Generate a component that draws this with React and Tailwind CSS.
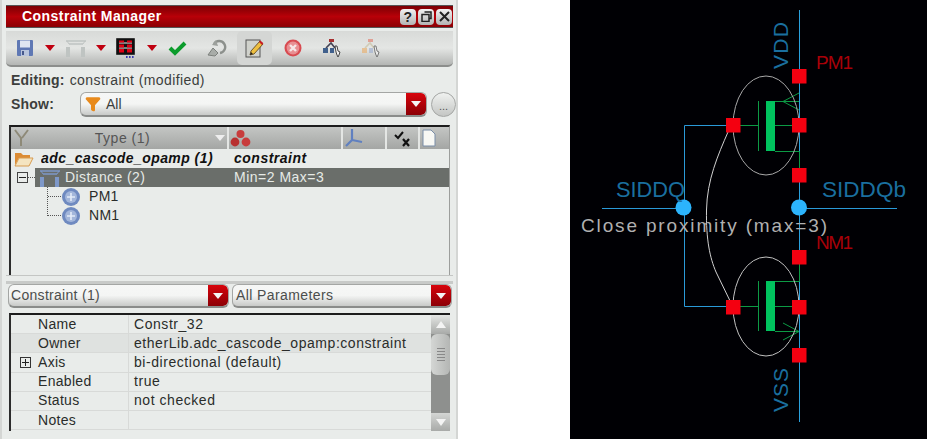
import { Filter } from 'lucide-react';

const Caret = ({ className = 'ml-2' }) => (
  <svg width="10" height="6" viewBox="0 0 10 6" className={className}><path d="M0 0h10L5 6z" fill="#c00010" /></svg>
);

const ComboButton = ({ w = 'w-[20px]' }) => (
  <div className={`${w} self-stretch flex items-center justify-center rounded-r-[5px] bg-gradient-to-b from-[#d8040c] to-[#8c0006]`}>
    <svg width="10" height="6" viewBox="0 0 10 6"><path d="M0 0h10L5 6z" fill="#f4f4f4" /></svg>
  </div>
);

const Combo = ({ className, children }) => (
  <div className={`flex items-center rounded-[6px] border border-[#a4a6a4] border-b-2 border-b-[#8a8c8a] bg-gradient-to-b from-[#f6f7f6] via-[#f4f5f4] to-[#c8cac8] overflow-hidden ${className}`}>
    <div className="flex-1 flex items-center min-w-0">{children}</div>
    <ComboButton />
  </div>
);

const TitleButton = ({ children }) => (
  <div className="w-[16px] h-[16px] rounded-[4px] bg-gradient-to-b from-[#f2f2f2] to-[#b4b4b4] flex items-center justify-center text-[14px] leading-none font-bold text-[#222]">
    {children}
  </div>
);

const Floppy = () => (
  <svg width="18" height="18" viewBox="0 0 18 18">
    <rect x="1" y="1" width="16" height="16" rx="1" fill="#5f78b4" />
    <rect x="4" y="1.5" width="10" height="7" fill="#dfe6f2" />
    <rect x="5" y="11" width="8" height="6" fill="#b8c4dc" />
    <rect x="6" y="12" width="2" height="4" fill="#47598c" />
  </svg>
);

const GateIcon = ({ color = '#bfc4c2' }) => (
  <svg width="22" height="20" viewBox="0 0 22 20">
    <path d="M1 3h20M4 6h14" stroke={color} strokeWidth="1.6" fill="none" />
    <path d="M4 6l-2-3M18 6l2-3" stroke={color} strokeWidth="1" fill="none" />
    <rect x="1" y="9" width="4" height="10" fill={color} />
    <rect x="16" y="9" width="4" height="10" fill={color} />
  </svg>
);

const MatrixIcon = () => (
  <svg width="20" height="21" viewBox="0 0 20 21">
    <rect x="1" y="1" width="17" height="15" fill="#111" stroke="#111" strokeWidth="1.6" />
    <path d="M3 5h13M3 10h13" stroke="#eee" strokeWidth="1" />
    <path d="M3 2.5h5v2H3zM11 2.5h5v2h-5zM3 6.5h5v3H3zM11 6.5h5v3h-5zM3 11h5v3.5H3zM11 11h5v3.5h-5z" fill="#e00014" />
    <path d="M10 19h1.6M13 19h1.6M16 19h1.6" stroke="#3a3ab0" strokeWidth="1.8" />
  </svg>
);

const Check = () => (
  <svg width="19" height="16" viewBox="0 0 19 16">
    <path d="M2 8l5 5L17 3" stroke="#0c9c2c" strokeWidth="4" fill="none" />
  </svg>
);

const UndoIcon = () => (
  <svg width="22" height="20" viewBox="0 0 22 20">
    <path d="M3 17l5-7 5 5-3 3z" fill="#a8aca8" stroke="#7c807c" />
    <path d="M9 6a6 6 0 1 1 6 9" stroke="#8c908c" strokeWidth="2.4" fill="none" />
    <path d="M11 2L7 7l6 1z" fill="#9ca09c" />
  </svg>
);

const EditIcon = () => (
  <svg width="20" height="20" viewBox="0 0 20 20">
    <rect x="1" y="2" width="14" height="17" fill="#d0d2cc" stroke="#555" />
    <path d="M5 17l1-4 9-10 3 3-9 10z" fill="#eec040" stroke="#553a10" strokeWidth="0.8" />
    <path d="M14 4l1.4-1.6 3 2.8L17 7z" fill="#c81c24" />
    <path d="M5 17l1-3 2 2z" fill="#222" />
  </svg>
);

const StopIcon = () => (
  <svg width="18" height="18" viewBox="0 0 18 18">
    <circle cx="9" cy="9" r="8.5" fill="#d84a50" />
    <circle cx="9" cy="9" r="6.4" fill="#e88f92" />
    <path d="M6 6l6 6M12 6l-6 6" stroke="#f6e6e6" strokeWidth="2.4" />
  </svg>
);

const ProbeIcon = ({ faded }) => (
  <svg width="20" height="20" viewBox="0 0 20 20" opacity={faded ? 0.65 : 1}>
    <rect x="7" y="1" width="5" height="3" fill={faded ? '#e08070' : '#a83030'} />
    <path d="M4 10l5-5 4 5" stroke={faded ? '#c8c0a0' : '#445'} strokeWidth="1.6" fill="none" />
    <rect x="1" y="10" width="5" height="5" fill={faded ? '#e8b070' : '#40608c'} />
    <rect x="8" y="10" width="4" height="5" fill={faded ? '#a0b0d0' : '#40608c'} />
    <path d="M13 8l2 0 1 5 2 1-1 3-1 2-1-2-1-3z" fill="#f4f4f4" stroke="#333" strokeWidth="0.9" />
  </svg>
);

const FolderIcon = () => (
  <svg width="20" height="16" viewBox="0 0 20 16">
    <path d="M1 14V2h6l2 2h7v3H5z" fill="#dc8c34" />
    <path d="M1 15l4-8h14l-4 8z" fill="#f4e4c0" stroke="#d89c50" />
  </svg>
);

const ObjIcon = () => (
  <svg width="20" height="20" viewBox="0 0 20 20">
    <circle cx="10" cy="10" r="9" fill="#6f8ac0" />
    <circle cx="10" cy="10" r="6" fill="#a3b6da" />
    <path d="M6 10h8M10 6v8" stroke="#e4ecf8" strokeWidth="1.6" />
  </svg>
);

const TreeRow = ({ indent, icon, label, value, active }) => (
  <div className="h-[19px] flex items-center">
    {indent}
    <div className={`flex-1 h-[19px] flex items-center ${active ? 'bg-[#6a6e6a] text-[#e6eae6]' : ''}`}>
      {icon}
      {label}
      {value}
    </div>
  </div>
);

const params = [
  ['Name', 'Constr_32'],
  ['Owner', 'etherLib.adc_cascode_opamp:constraint', true],
  ['Axis', 'bi-directional (default)', false, true],
  ['Enabled', 'true'],
  ['Status', 'not checked'],
  ['Notes', ''],
];

const Schematic = () => (
  <svg width="357" height="439" viewBox="570 0 357 439" className="block">
    <path d="M799.5 10V422" stroke="#2aa0dc" strokeWidth="1" />
    <path d="M602 208.5H684M799 208.5H897M684.5 125.5V306.5M684.5 125.5H733M684.5 306.5H733" stroke="#2a9ad8" strokeWidth="1" fill="none" />

    <g stroke="#0c9a44" strokeWidth="1" fill="none">
      <path d="M740 125.5H758.5M758.5 101V151M775 125.5H792" />
      <path d="M775 101.5H799M799 93L783 101.5L799 110" />
      <path d="M775 151.5H799.5V168" />
      <path d="M740 306.5H758.5M758.5 281V331M775 306.5H792" />
      <path d="M775 281.5H799.5V264" />
      <path d="M775 331.5H799M783 323L799 331.5L783 340" />
    </g>
    <rect x="766" y="101" width="9" height="50" fill="#00c35e" />
    <rect x="766" y="281" width="9" height="50" fill="#00c35e" />

    <ellipse cx="766" cy="125.5" rx="33" ry="49.5" fill="none" stroke="#a8a8a8" strokeWidth="1" />
    <ellipse cx="766" cy="306.5" rx="33" ry="49.5" fill="none" stroke="#c0c0c0" strokeWidth="1" />
    <path d="M728 132C718 155 707 180 706.5 210C706 240 710 258 716 272L733 307" fill="none" stroke="#d0d0d0" strokeWidth="1" />

    {[[792, 69], [792, 118], [792, 168], [726, 118], [792, 250], [792, 300], [792, 348], [726, 300]].map(([x, y]) => (
      <rect key={`${x}-${y}`} x={x} y={y} width="14.5" height="14.5" fill="#f40010" />
    ))}
    <circle cx="683.5" cy="207.5" r="8" fill="#2cb4fc" />
    <circle cx="799" cy="207.5" r="8" fill="#2cb4fc" />

    <g fontFamily="'Liberation Sans', sans-serif">
      <text x="616" y="197" fontSize="22" fill="#1a6f9f" textLength="69" lengthAdjust="spacingAndGlyphs">SIDDQ</text>
      <text x="822" y="197" fontSize="22" fill="#1a6f9f" textLength="84" lengthAdjust="spacingAndGlyphs">SIDDQb</text>
      <text x="581" y="232" fontSize="19" fill="#b0b0b0" textLength="246" lengthAdjust="spacing">Close proximity (max=3)</text>
      <text x="816" y="69" fontSize="19" fill="#a80008" textLength="37" lengthAdjust="spacing">PM1</text>
      <text x="816" y="249" fontSize="19" fill="#a80008" textLength="37" lengthAdjust="spacing">NM1</text>
      <text transform="translate(788 69) rotate(-90)" fontSize="21" fill="#1a6f9f" textLength="47" lengthAdjust="spacing">VDD</text>
      <text transform="translate(788 412) rotate(-90)" fontSize="21" fill="#1a6f9f" textLength="44" lengthAdjust="spacing">VSS</text>
    </g>
  </svg>
);

export default function App() {
  return (
    <div className="w-[927px] h-[439px] flex bg-white overflow-hidden font-['Liberation_Sans',sans-serif] text-[14px] text-[#2a2c2a]">
      <div className="w-[458px] h-[439px] bg-[#e9ecea] border-x-2 border-x-[#d4d6d4] pl-[4px] pr-[3px] pt-[5px] flex flex-col">
        {/* title bar */}
        <div className="h-[23px] shrink-0 flex items-center justify-between pl-[16px] pr-[1px] border-y border-y-[#555] bg-gradient-to-b from-[#7c0004] via-[#b80008] to-[#8c0004] text-white font-bold tracking-[0.45px]">
          <span>Constraint Manager</span>
          <div className="flex gap-[2px]">
            <TitleButton>?</TitleButton>
            <TitleButton>
              <svg width="11" height="11" viewBox="0 0 11 11"><path d="M3.5 1h6.5v6.5h-2M1 3.5h7v7H1z" fill="none" stroke="#222" strokeWidth="1.5" /></svg>
            </TitleButton>
            <TitleButton>
              <svg width="11" height="11" viewBox="0 0 11 11"><path d="M1 1l9 9M10 1l-9 9" stroke="#222" strokeWidth="2" /></svg>
            </TitleButton>
          </div>
        </div>

        {/* toolbar */}
        <div className="h-[36px] shrink-0 mt-[3px] flex items-center pl-[10px] rounded-b-[5px] border-b-2 border-b-[#8c8e8c] bg-gradient-to-b from-[#d8dad8] via-[#e4e6e4] to-[#b4b6b4]">
          <Floppy />
          <Caret className="ml-[11px]" />
          <span className="ml-[10px]"><GateIcon /></span>
          <Caret className="ml-[9px]" />
          <span className="ml-[10px]"><MatrixIcon /></span>
          <Caret className="ml-[11px]" />
          <span className="ml-[11px]"><Check /></span>
          <span className="ml-[18px]"><UndoIcon /></span>
          <div className="ml-[10px] w-[35px] h-[34px] rounded-[5px] bg-[#d4d6d4] flex items-center justify-center"><EditIcon /></div>
          <span className="ml-[12px]"><StopIcon /></span>
          <span className="ml-[20px]"><ProbeIcon /></span>
          <span className="ml-[19px]"><ProbeIcon faded /></span>
        </div>

        {/* editing */}
        <div className="h-[24px] shrink-0 flex items-center pl-[5px] pt-[2px]">
          <span className="font-bold text-[#3c3e3c] mr-[5px] tracking-[0.2px]">Editing:</span>
          <span className="text-[#3c3e3c] tracking-[0.4px]">constraint (modified)</span>
        </div>

        {/* show */}
        <div className="h-[25px] shrink-0 flex items-center pl-[5px] mt-[1px] -mr-[3px]">
          <span className="font-bold text-[#3c3e3c] w-[69px] shrink-0 tracking-[0.2px]">Show:</span>
          <Combo className="w-[347px] h-[25px] shrink-0">
            <Filter size={16} className="ml-[4px] mr-[5px] text-[#e88a1c] fill-[#e88a1c]" />
            <span className="text-[#3c3e3c]">All</span>
          </Combo>
          <div className="ml-[4px] w-[25px] h-[25px] shrink-0 rounded-full border border-[#a4a6a4] bg-gradient-to-b from-[#f0f2f0] to-[#c4c6c4] flex items-center justify-center text-[11px] text-[#555] pt-[3px]">...</div>
        </div>

        {/* tree */}
        <div className="h-[150px] shrink-0 mt-[8px] ml-[3px] mr-[3px] border-t-2 border-t-[#1c1c1c] border-l-2 border-l-[#2c2c2c] border-r border-r-[#9c9e9c] flex flex-col">
          <div className="h-[22px] shrink-0 flex items-center text-[#555] text-[14px] bg-gradient-to-b from-[#c4c6c4] to-[#a4a6a4]">
            <div className="w-[218px] h-full flex items-center border-r-2 border-r-[#e4e6e4] relative">
              <svg width="16" height="18" viewBox="0 0 16 18" className="ml-[3px]"><path d="M1 1l6 8v8M14 1L8 9" stroke="#8e8a78" strokeWidth="2" fill="none" /></svg>
              <span className="flex-1 text-center tracking-[0.5px]">Type (1)</span>
              <svg width="10" height="6" viewBox="0 0 10 6" className="mr-[2px]"><path d="M0 0h10L5 6z" fill="#eee" /></svg>
            </div>
            <div className="w-[114px] h-full flex items-center border-r-2 border-r-[#e4e6e4] pl-[1px]">
              <svg width="21" height="19" viewBox="0 0 21 19"><circle cx="10.5" cy="5" r="4" fill="#c83c3c" /><circle cx="5" cy="13" r="4.4" fill="#b83030" /><circle cx="16" cy="13" r="4.4" fill="#c83c3c" /></svg>
            </div>
            <div className="w-[44px] h-full flex items-center border-r-2 border-r-[#e4e6e4] pl-[1px]">
              <svg width="20" height="20" viewBox="0 0 20 20"><path d="M8 1v11L2 18M8 12l10 2" stroke="#6080c0" strokeWidth="2.2" fill="none" /></svg>
            </div>
            <div className="w-[33px] h-full flex items-center justify-center border-r-2 border-r-[#e4e6e4] text-[#111]">
              <svg width="20" height="17" viewBox="0 0 20 17"><path d="M2 5l3 3 5-6" stroke="#111" strokeWidth="2" fill="none" /><path d="M10 9l6 7M16 9l-6 7" stroke="#111" strokeWidth="2.2" /></svg>
            </div>
            <div className="flex-1 h-full flex items-center pl-[2px]">
              <svg width="14" height="18" viewBox="0 0 14 18"><path d="M1 1h8l4 4v12H1z" fill="#f8f8f4" stroke="#7a8ea8" /></svg>
            </div>
          </div>

          <div className="h-[19px] flex items-center pl-[3px] font-bold italic text-[#111]">
            <FolderIcon />
            <span className="w-[193px] ml-[7px] truncate tracking-[0.45px]">adc_cascode_opamp (1)</span>
            <span className="tracking-[0.5px]">constraint</span>
          </div>
          <TreeRow
            active
            indent={(
              <div className="w-[24px] shrink-0 flex items-center pl-[6px]">
                <div className="w-[11px] h-[11px] border border-[#444] flex items-center justify-center"><div className="w-[7px] h-px bg-[#222]" /></div>
                <div className="w-[7px] border-t border-dotted border-t-[#555]" />
              </div>
            )}
            icon={<span className="ml-[4px] mr-[4px]"><GateIcon color="#7e98c8" /></span>}
            label={<span className="w-[169px] tracking-[0.4px]">Distance (2)</span>}
            value={<span className="tracking-[0.5px]">Min=2 Max=3</span>}
          />
          <div className="relative">
            <div className="absolute left-[36px] top-0 h-[29px] border-l border-dotted border-l-[#555]" />
            {['PM1', 'NM1'].map((name) => (
              <div key={name} className="h-[19px] flex items-center pl-[37px]">
                <div className="w-[13px] border-t border-dotted border-t-[#555]" />
                <ObjIcon />
                <span className="ml-[8px] tracking-[0.3px]">{name}</span>
              </div>
            ))}
          </div>
        </div>

        {/* splitter */}
        <div className="h-[9px] shrink-0 border-b-[3px] border-b-[#c8cac8] border-t border-t-[#c4c6c4]" />

        {/* combos */}
        <div className="h-[24px] shrink-0 ml-[2px] mr-[1px] flex gap-[3px]">
          <Combo className="w-[221px]"><span className="pl-[2px] tracking-[0.3px] text-[#4c4e4c]">Constraint (1)</span></Combo>
          <Combo className="flex-1"><span className="pl-[3px] tracking-[0.4px] text-[#4c4e4c]">All Parameters</span></Combo>
        </div>

        {/* params */}
        <div className="h-[118px] shrink-0 mt-[5px] ml-[3px] mr-[3px] border-t-2 border-t-[#1c1c1c] border-l-2 border-l-[#2c2c2c] flex">
          <div className="flex-1 min-w-0">
            {params.map(([name, value, shaded, expand]) => (
              <div key={name} className={`h-[19.2px] flex items-center border-b border-b-[#d8dad8] ${shaded ? 'bg-[#dfe2e0]' : ''}`}>
                <div className="w-[27px] shrink-0 flex justify-center pl-[2px]">
                  {expand && (
                    <div className="w-[11px] h-[11px] border border-[#333] relative flex items-center justify-center">
                      <div className="w-[7px] h-px bg-[#222]" />
                      <div className="absolute w-px h-[7px] bg-[#222]" />
                    </div>
                  )}
                </div>
                <div className="w-[91px] shrink-0 self-stretch flex items-center border-r border-r-[#d8dad8] tracking-[0.3px]">{name}</div>
                <div className="pl-[5px] tracking-[0.55px] whitespace-nowrap">{value}</div>
              </div>
            ))}
          </div>
          <div className="w-[19px] shrink-0 flex flex-col bg-[#8e908e]">
            <div className="h-[19px] bg-gradient-to-b from-[#e4e6e4] to-[#a8aaa8] flex items-center justify-center">
              <svg width="10" height="7" viewBox="0 0 10 7"><path d="M0 7h10L5 0z" fill="#f4f4f4" /></svg>
            </div>
            <div className="h-[41px] rounded-[6px] bg-gradient-to-r from-[#d4d6d4] to-[#b4b6b4] flex flex-col items-center justify-center gap-[2px]">
              {[0, 1, 2, 3, 4].map((i) => <div key={i} className="w-[8px] h-px bg-[#888]" />)}
            </div>
            <div className="flex-1" />
            <div className="h-[18px] bg-gradient-to-b from-[#d4d6d4] to-[#a8aaa8] flex items-center justify-center">
              <svg width="10" height="7" viewBox="0 0 10 7"><path d="M0 0h10L5 7z" fill="#f4f4f4" /></svg>
            </div>
          </div>
        </div>
      </div>

      <div className="w-[112px]" />
      <div className="w-[357px] h-[439px] bg-[#000004]">
        <Schematic />
      </div>
    </div>
  );
}
